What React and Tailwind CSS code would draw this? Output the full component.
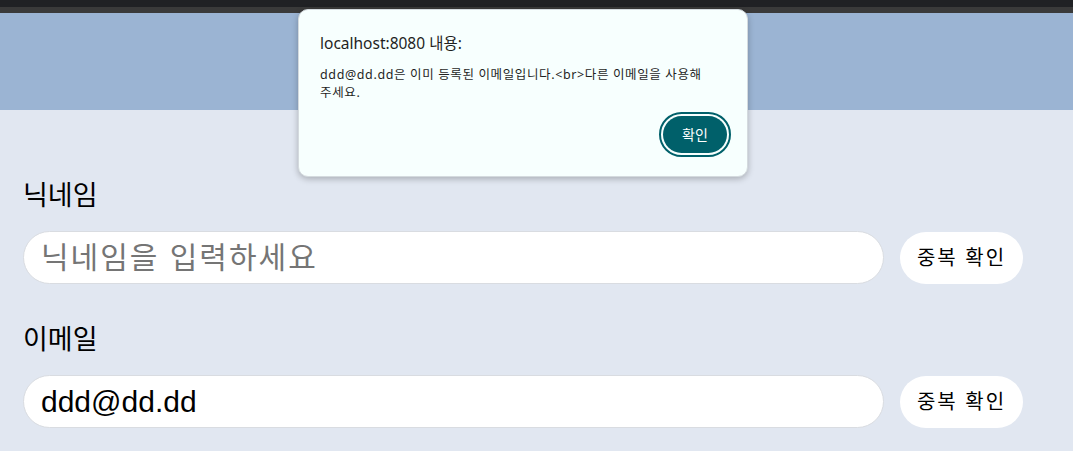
import React from 'react'

const Field = ({label, placeholder, value}) => {
  return (
    <div className="mb-[38px]">
      <div className="text-[27px] leading-[36px] text-black mb-[17px]">{label}</div>
      <div className="flex items-center gap-4">
        <input
          readOnly
          className="flex-1 h-[53px] rounded-full bg-white border border-[#d9dce1] pl-[17px] text-[30px] text-black placeholder:text-[#757575] placeholder:tracking-[2px] outline-none"
          placeholder={placeholder}
          value={value}
        />
        <button className="w-[123px] h-[52px] rounded-full bg-white text-[20px] tracking-[2px] text-black shrink-0">
          중복 확인
        </button>
      </div>
    </div>
  )
}

const AlertBox = () => {
  return (
    <div className="absolute left-[298px] top-[9px] w-[450px] h-[168px] rounded-[10px] bg-[#f7fffe] border border-[#d4dade] shadow-[0_2px_6px_rgba(0,0,0,0.25)] pl-[21px] pr-[16px] pt-[23px] font-['Noto_Sans','Noto_Sans_CJK_KR',sans-serif] text-[#1f1f1f]">
      <div className="text-[15.5px] leading-[20px]">localhost:8080 내용:</div>
      <p className="text-[12.5px] leading-[18px] mt-[13px] tracking-[0.05em]">
        ddd@dd.dd은 이미 등록된 이메일입니다.&lt;br&gt;다른 이메일을 사용해
        <br />
        주세요.
      </p>
      <div className="flex justify-end mt-[10px]">
        <button className="w-[72px] h-[45px] rounded-full border-2 border-[#00606a] p-[2px]">
          <span className="flex items-center justify-center w-full h-full rounded-full bg-[#00606a] text-white text-[14px]">
            확인
          </span>
        </button>
      </div>
    </div>
  )
}

export default function App() {
  return (
    <div className="relative w-[1073px] h-[451px] overflow-hidden bg-[#e1e7f1] font-['Liberation_Sans','Noto_Sans_CJK_KR',sans-serif]">
      <div className="h-[7px] bg-[#202124]"></div>
      <div className="h-[6px] bg-[#3a3a3a]"></div>
      <div className="h-[97px] bg-[#9bb4d3]"></div>
      <div className="pl-[23px] pr-[50px] pt-[68px]">
        <Field label="닉네임" placeholder="닉네임을 입력하세요" value="" />
        <Field label="이메일" placeholder="이메일을 입력하세요" value="ddd@dd.dd" />
      </div>
      <AlertBox />
    </div>
  )
}
